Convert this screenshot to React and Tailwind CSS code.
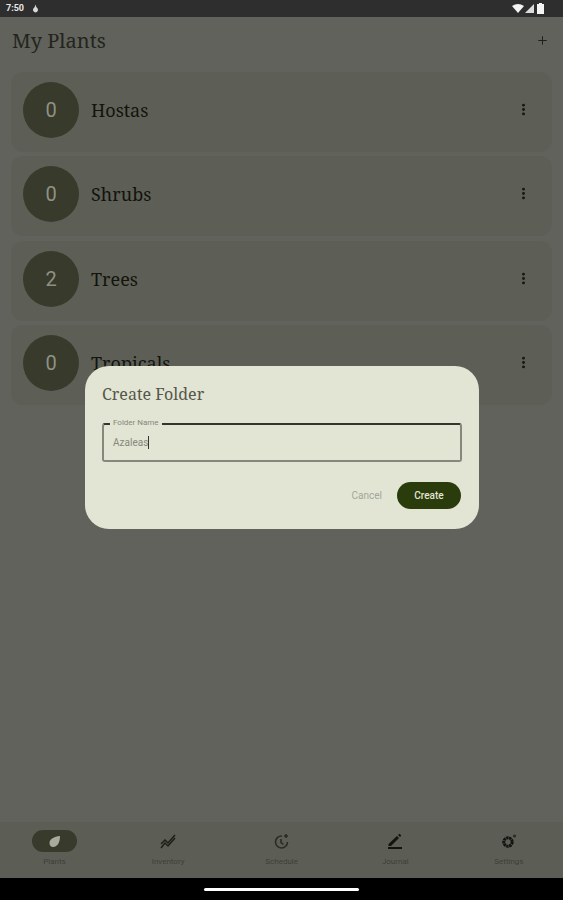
import React from "react";
import { MoreVertical, Plus } from "lucide-react";

const folders = [["0", "Hostas"], ["0", "Shrubs"], ["2", "Trees"], ["0", "Tropicals"]];

function Row({ count, name }) {
  return (
    <div className="flex h-[80px] items-start rounded-xl bg-[#5d5f57] pl-3 pr-[21px] pt-[10px]">
      <div className="flex h-[56px] w-[56px] items-center justify-center rounded-full bg-[#383a2c] text-[20px] text-[#8f9283] font-['Roboto',sans-serif]">
        {count}
      </div>
      <div className="ml-3 h-[56px] flex-1 font-['Noto_Serif','DejaVu_Serif',serif] text-[18px] leading-[56px] text-[#12140d]">{name}</div>
      <MoreVertical size={15} strokeWidth={2.6} className="mt-[20px] text-[#12140d]" />
    </div>
  );
}

function NavItem({ label, active, children }) {
  return (
    <div className="flex w-[113.6px] shrink-0 flex-col items-center">
      <div className={`flex h-[22px] w-[45px] items-center justify-center rounded-full ${active ? "bg-[#383a2c]" : ""}`}>
        {children}
      </div>
      <div className="mt-[4px] font-['Roboto',sans-serif] text-[8px] leading-[12px] text-[#3c3e36]">{label}</div>
    </div>
  );
}

export default function App() {
  return (
    <div className="relative flex h-[900px] w-[563px] flex-col overflow-hidden bg-[#60625b]">
      <div className="flex h-[17px] items-center justify-between bg-[#2e2e2e] pl-[6px] pr-[19px] font-['Roboto',sans-serif] text-[9px] font-bold text-[#e8e8e8]">
        <div className="flex items-center gap-[8px]">
          <span>7:50</span>
          <svg width="7" height="9" viewBox="0 0 7 9"><path d="M3.5 0.5 L4.3 3 Q6.5 4.5 6 6.5 Q5 8.5 3.5 8.5 Q2 8.5 1 6.5 Q0.5 4.5 2.7 3 Z" fill="#d8d8d8" /></svg>
        </div>
        <div className="flex items-center gap-[1px]">
          <svg width="12" height="9" viewBox="0 0 12 9"><path d="M0 2 Q6 -2 12 2 L6 9 Z" fill="#f4f4f4" /></svg>
          <svg width="9" height="9" viewBox="0 0 9 9"><path d="M0 9 L9 0 V9 Z" fill="#dcdcdc" /></svg>
          <svg width="7" height="11" viewBox="0 0 7 11" className="ml-[2px]"><path d="M2 0 H5 V1 H7 V11 H0 V1 H2 Z" fill="#f4f4f4" /></svg>
        </div>
      </div>

      <div className="flex h-[47px] items-center justify-between pl-[12px] pr-[14px]">
        <div className="font-['Noto_Serif','DejaVu_Serif',serif] text-[20px] text-[#23251d]">My Plants</div>
        <Plus size={13} strokeWidth={1.8} className="text-[#1d1f17]" />
      </div>

      <div className="mt-[8px] flex flex-col gap-[4.3px] px-[11px]">
        {folders.map(([c, n]) => <Row key={n} count={c} name={n} />)}
      </div>

      <div className="mt-auto flex h-[56px] items-start bg-[#5c5e56] pt-[8px]">
        <div className="-ml-[2.3px] flex">
          <NavItem label="Plants" active>
            <svg width="13" height="13" viewBox="0 0 13 13"><path d="M12 1 C12 8 9 12 5 12 C3 12 1.5 10.5 1.5 8 C1.5 4 6 1.5 12 1 Z" fill="#a9ab9c" /></svg>
          </NavItem>
          <NavItem label="Inventory">
            <svg width="16" height="15" viewBox="0 0 16 15" fill="none" stroke="#1d1f17" strokeWidth="1.5"><path d="M1 10 L5 6 L8 9 L15 1" /><path d="M1 14 L5 9 L8 12 L15 4" /></svg>
          </NavItem>
          <NavItem label="Schedule">
            <svg width="17" height="17" viewBox="0 0 17 17" fill="none" stroke="#2a2c24" strokeWidth="1.6"><path d="M9 3 A6 6 0 1 0 14.5 9" /><path d="M8 6 V9.5 L10.5 11.5" /><path d="M13 1 V5 M11 3 H15" /></svg>
          </NavItem>
          <NavItem label="Journal">
            <svg width="16" height="16" viewBox="0 0 16 16"><path d="M1.5 11 L10 3 L12 5 L4 13 H1.5 Z" fill="#12140d" /><path d="M11 2 L12.5 0.8 L14.3 2.6 L13 4 Z" fill="#12140d" /><rect x="1" y="14" width="14" height="2" fill="#12140d" /></svg>
          </NavItem>
          <NavItem label="Settings">
            <svg width="16" height="16" viewBox="0 0 16 16" fill="none"><circle cx="7" cy="9" r="4.2" stroke="#12140d" strokeWidth="3" strokeDasharray="2.4 0.5" /><circle cx="13.5" cy="3" r="1.6" fill="#2a2c24" /></svg>
          </NavItem>
        </div>
      </div>

      <div className="flex h-[22px] items-center justify-center bg-black">
        <div className="h-[3px] w-[155px] rounded-full bg-white" />
      </div>

      <div className="absolute left-[85px] top-[366px] h-[163px] w-[394px] rounded-[24px] bg-[#e2e5d4] px-[17px] pt-[17px]">
        <div className="font-['Noto_Serif','DejaVu_Serif',serif] text-[16px] leading-[22px] text-[#55574a]">Create Folder</div>
        <div className="relative mt-[18px] flex h-[39px] items-center rounded-[3px] border-2 border-[#85887a] border-t-[#33362a] px-[9px]">
          <span className="absolute -top-[7px] left-[6px] bg-[#e2e5d4] px-[3px] font-['Roboto',sans-serif] text-[8px] leading-[10px] text-[#85887a]">Folder Name</span>
          <span className="font-['Roboto',sans-serif] text-[10px] text-[#85887a]">Azaleas</span>
          <span className="h-[13px] w-[1px] bg-[#33362a]" />
        </div>
        <div className="mt-[20px] flex items-center justify-end gap-[15px] pr-[1px]">
          <span className="font-['Roboto',sans-serif] text-[10px] text-[#a3a698]">Cancel</span>
          <div className="flex h-[27px] w-[64px] items-center justify-center rounded-full bg-[#2a3c0c] font-['Roboto',sans-serif] text-[10px] font-medium text-[#e2e5d4]">Create</div>
        </div>
      </div>
    </div>
  );
}
